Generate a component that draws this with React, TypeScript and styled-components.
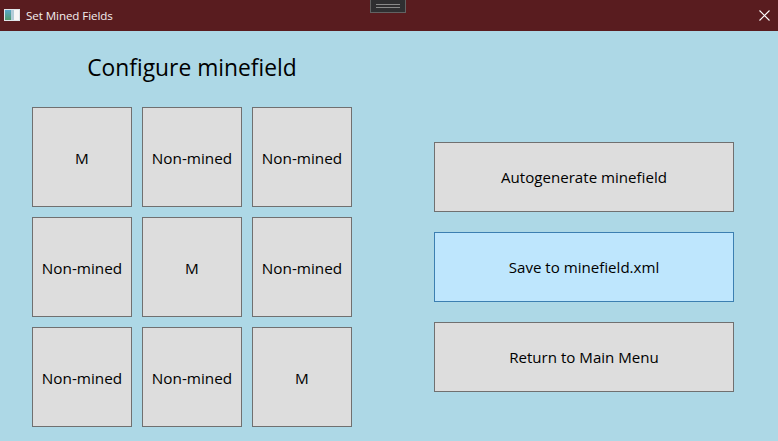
import React from "react";
import styled, { createGlobalStyle } from "styled-components";

const Global = createGlobalStyle`
  html, body { margin: 0; padding: 0; }
  body { font-family: "Open Sans", "Noto Sans", "Liberation Sans", sans-serif; background: #add8e6; }
`;

const Window = styled.div`
  width: 778px;
  height: 441px;
  display: flex;
  flex-direction: column;
  background: #add8e6;
  overflow: hidden;
  position: relative;
`;

const TitleBar = styled.header`
  height: 31px;
  flex: none;
  display: flex;
  align-items: center;
  background: #591c1f;
  padding: 0 8px 0 4px;
  color: #f4eeee;
  font-size: 12px;
`;

const AppIcon = styled.svg`
  width: 16px;
  height: 12px;
  margin: -2px 6px 0 0;
`;

const TitleText = styled.span`
  flex: 1;
  font-size: 11.6px;
  letter-spacing: -0.08px;
`;

const CloseIcon = styled.svg`
  width: 11px;
  height: 11px;
  margin-top: -1px;
`;

const DragHandle = styled.div`
  position: absolute;
  top: 0;
  left: 370px;
  width: 36px;
  height: 13px;
  box-sizing: border-box;
  border: 1px solid #626262;
  border-top: none;
  background: #2f2f31;
  display: flex;
  flex-direction: column;
  justify-content: center;
  align-items: center;
  gap: 2px;
`;

const HandleLine = styled.span`
  width: 24px;
  height: 1px;
  background: #8a8a8a;
`;

const Content = styled.main`
  flex: 1;
  display: flex;
  padding: 0 44px 0 32px;
  justify-content: space-between;
`;

const LeftColumn = styled.section`
  display: flex;
  flex-direction: column;
  width: 320px;
`;

const Heading = styled.h1`
  margin: 20px 0 21px;
  height: 35px;
  line-height: 33px;
  font-size: 22.8px;
  font-weight: 400;
  color: #000;
  text-align: center;
`;

const Grid = styled.div`
  display: grid;
  grid-template-columns: repeat(3, 100px);
  grid-auto-rows: 100px;
  gap: 10px;
`;

const Button = styled.button<{ $active?: boolean }>`
  box-sizing: border-box;
  margin: 0;
  padding: 2px 0 0;
  border: 1px solid ${(p) => (p.$active ? "#3c7fb1" : "#707070")};
  background: ${(p) => (p.$active ? "#bee6fd" : "#dddddd")};
  color: #000;
  font-family: inherit;
  font-size: 15.3px;
  font-weight: 400;
`;

const RightColumn = styled.section`
  display: flex;
  flex-direction: column;
  gap: 20px;
  width: 300px;
  padding-top: 111px;
`;

const ActionButton = styled(Button)`
  height: 70px;
  padding: 0;
  font-size: 15.1px;
`;

const cells = ["M", "Non-mined", "Non-mined", "Non-mined", "M", "Non-mined", "Non-mined", "Non-mined", "M"];

export default function App() {
  return (
    <Window>
      <Global />
      <TitleBar>
        <AppIcon viewBox="0 0 16 12">
          <defs>
            <linearGradient id="pane" x1="0" y1="0" x2="0" y2="1">
              <stop offset="0" stopColor="#5aa6c8" />
              <stop offset="1" stopColor="#4f9a6e" />
            </linearGradient>
          </defs>
          <rect x="0" y="0" width="16" height="12" fill="#dfe6ea" />
          <rect x="1" y="1" width="6" height="10" fill="url(#pane)" />
          <rect x="7" y="1" width="3" height="10" fill="#b3ccd8" />
          <rect x="10" y="1" width="5" height="10" fill="#f6f6f6" />
        </AppIcon>
        <TitleText>Set Mined Fields</TitleText>
        <CloseIcon viewBox="0 0 11 11" fill="none" stroke="#ffffff" strokeWidth="1.1">
          <path d="M0.5 0.5L10.5 10.5M10.5 0.5L0.5 10.5" />
        </CloseIcon>
      </TitleBar>
      <DragHandle>
        <HandleLine />
        <HandleLine />
      </DragHandle>
      <Content>
        <LeftColumn>
          <Heading>Configure minefield</Heading>
          <Grid>
            {cells.map((c, i) => (
              <Button key={i}>{c}</Button>
            ))}
          </Grid>
        </LeftColumn>
        <RightColumn>
          <ActionButton>Autogenerate minefield</ActionButton>
          <ActionButton $active>Save to minefield.xml</ActionButton>
          <ActionButton>Return to Main Menu</ActionButton>
        </RightColumn>
      </Content>
    </Window>
  );
}
